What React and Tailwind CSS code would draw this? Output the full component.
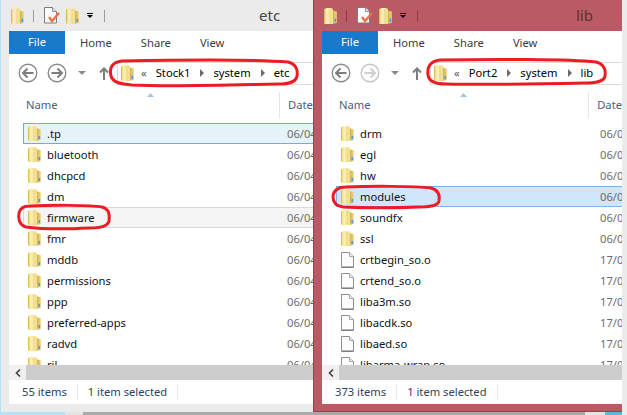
import React from 'react';

const leftRows = ['.tp', 'bluetooth', 'dhcpcd', 'dm', 'firmware', 'fmr', 'mddb', 'permissions', 'ppp', 'preferred-apps', 'radvd', 'ril'];
const rightRows = ['drm', 'egl', 'hw', 'modules', 'soundfx', 'ssl', 'crtbegin_so.o', 'crtend_so.o', 'liba3m.so', 'libacdk.so', 'libaed.so', 'libarma-wrap.so'];

const rowStyles = {
    focus: 'bg-[#e5f3fb] border-[#7da7d8]',
    hover: 'bg-[#f5f5f5] border-[#d9d9d9]',
    selected: 'bg-[#cfe6fc] border-[#7db4ea]',
    none: 'border-transparent',
};

// Side-on folder used in the list, the address bar and the title bar
const Folder = ({ className = 'w-[13px] h-[15px]' }) => (
    <svg viewBox="0 0 13 15" className={`${className} shrink-0`} preserveAspectRatio="none">
        <defs>
            <linearGradient id="folderFront" x1="0" y1="0" x2="1" y2="0">
                <stop offset="0" stopColor="#e9cf72" />
                <stop offset="0.35" stopColor="#fbf1b4" />
                <stop offset="1" stopColor="#f2dc88" />
            </linearGradient>
            <linearGradient id="folderBack" x1="0" y1="0" x2="1" y2="0">
                <stop offset="0" stopColor="#c9a94e" />
                <stop offset="1" stopColor="#efd67e" />
            </linearGradient>
        </defs>
        <path d="M8 2 L12.8 3.2 L12.8 14 L8 15 Z" fill="url(#folderBack)" />
        <path d="M0 1.2 L2.5 0 L7.5 0 L9 1.2 L9 15 L1 15 Q0 15 0 14 Z" fill="url(#folderFront)" />
        <path d="M0.4 1.4 V14" stroke="#d3b458" strokeWidth="0.8" />
        <path d="M6 1 V15" stroke="#e6cd76" strokeWidth="0.7" />
        <rect x="10.5" y="10" width="1.6" height="3.2" fill="#46a0e0" />
    </svg>
);

const FileIcon = () => (
    <svg viewBox="0 0 13 16" className="w-[13px] h-[16px] shrink-0">
        <path d="M0.5 0.5 H8.5 L12.5 4.5 V15.5 H0.5 Z" fill="#fdfdfd" stroke="#8f8f8f" />
        <path d="M8.5 0.5 V4.5 H12.5" fill="#eeeeee" stroke="#a8a8a8" />
        <path d="M1 15 H12" stroke="#6f6f6f" />
    </svg>
);

const DocCheck = () => (
    <svg viewBox="0 0 16 17" className="w-[16px] h-[17px] shrink-0">
        <path d="M0.5 0.5 H8.5 L12.5 4.5 V16 H0.5 Z" fill="#fafafa" stroke="#7c7c7c" />
        <path d="M8.5 0.5 V4.5 H12.5" fill="#e8e8e8" stroke="#8f8f8f" />
        <path d="M5 10 L8 14 L15 6" fill="none" stroke="#e8734a" strokeWidth="2.4" />
    </svg>
);

const NavCircle = ({ dim, flip }) => (
    <svg viewBox="0 0 20 20" className="w-[20px] h-[20px] shrink-0">
        <circle cx="10" cy="10" r="8.8" fill="#fff" stroke={dim ? '#c4c4c4' : '#8a8a8a'} strokeWidth="1.4" />
        <path
            d={flip ? 'M4.5 10 H14.5 M10.5 5.5 L15 10 L10.5 14.5' : 'M15.5 10 H5.5 M9.5 5.5 L5 10 L9.5 14.5'}
            fill="none"
            stroke={dim ? '#cfcfcf' : '#7d7d7d'}
            strokeWidth="2"
        />
    </svg>
);

const Crumb = () => (
    <svg viewBox="0 0 4 8" className="w-[4px] h-[8px] shrink-0">
        <path d="M0 0 L4 4 L0 8 Z" fill="#6a6a6a" />
    </svg>
);

const Explorer = ({ title, titleGap, rows, rowStates, isFile, date, parent, crumbs, items, forwardDim, frame, sep, titleColor, width }) => (
    <div className={`${width} ${frame} shrink-0 h-[412px] flex flex-col overflow-hidden`}>
        {/* Title bar */}
        <div className="h-[31px] shrink-0 flex items-center pl-[10px]">
            <Folder className="w-[13px] h-[16px]" />
            <span className={`w-px h-[12px] ml-[9px] ${sep}`} />
            <span className="ml-[10px]"><DocCheck /></span>
            <span className="ml-[6px]"><Folder className="w-[13px] h-[16px]" /></span>
            <span className="ml-[8px] flex flex-col items-center gap-[1px]">
                <span className="w-[6px] h-px bg-black" />
                <svg viewBox="0 0 6 3" className="w-[6px] h-[3px]"><path d="M0 0 H6 L3 3 Z" fill="#000" /></svg>
            </span>
            <span className={`w-px h-[12px] ml-[11px] ${sep}`} />
            <span className={`${titleGap} text-[15px] leading-none ${titleColor}`}>{title}</span>
        </div>

        {/* Client area */}
        <div className="ml-[8px] flex-1 min-h-0 bg-white flex flex-col">
            {/* Ribbon tabs */}
            <div className="h-[23px] shrink-0 flex items-center text-[11.2px] text-[#3c3c3c]">
                <div className="w-[56px] h-full bg-[#1979ca] text-white flex items-center justify-center">File</div>
                <span className="ml-[15px] mt-[2px]">Home</span>
                <span className="ml-[29px] mt-[2px]">Share</span>
                <span className="ml-[29px] mt-[2px]">View</span>
            </div>

            {/* Address row */}
            <div className="h-[38px] shrink-0 flex items-center pl-[9px]">
                <NavCircle />
                <span className="ml-[9px]"><NavCircle dim={forwardDim} flip /></span>
                <svg viewBox="0 0 8 4" className="w-[8px] h-[4px] ml-[11px] shrink-0"><path d="M0 0 H8 L4 4 Z" fill="#8a8a8a" /></svg>
                <svg viewBox="0 0 10 13" className="w-[10px] h-[13px] ml-[13px] shrink-0">
                    <path d="M5 13 V1.5 M1 5.5 L5 1.5 L9 5.5" fill="none" stroke="#7d7d7d" strokeWidth="2" />
                </svg>
                <div className="ml-[8px] flex-1 h-[23px] border-y border-l border-[#d9d9d9] flex items-center pl-[3px] text-[11.2px] text-black whitespace-nowrap min-w-0">
                    <Folder className="w-[13px] h-[16px]" />
                    <span className="ml-[7px] text-[#555] leading-none">«</span>
                    <span className="ml-[9px]">{parent}</span>
                    <span className="ml-[10px]"><Crumb /></span>
                    <span className="ml-[9px]">system</span>
                    <span className="ml-[10px]"><Crumb /></span>
                    <span className="ml-[9px]">{crumbs}</span>
                </div>
            </div>

            {/* Column header */}
            <div className="h-[26px] shrink-0 flex text-[11.2px] text-[#4c607a] whitespace-nowrap">
                <div className="ml-[17px] w-[254px] border-r border-[#e5e5e5] flex flex-col items-start">
                    <svg viewBox="0 0 7 4" className="w-[7px] h-[4px] ml-[121px] mt-[1px]"><path d="M0 4 L3.5 0 L7 4 Z" fill="#9fc4e4" /></svg>
                    <span className="leading-[16px]">Name</span>
                </div>
                <span className="ml-[8px] mt-[5px] leading-[16px]">Date</span>
            </div>

            {/* File list */}
            <div className="mt-[5px] flex-1 min-h-0 overflow-hidden pl-[14px]">
                {rows.map((name, idx) => (
                    <div key={name} className={`h-[21px] w-[400px] border flex items-center pl-[4px] text-[11.2px] whitespace-nowrap ${rowStyles[rowStates[idx] || 'none']}`}>
                        {isFile(idx) ? <FileIcon /> : <Folder />}
                        <span className="ml-[6px] mt-px w-[240px] text-[#111]">{name}</span>
                        <span className="mt-px text-[#6d6d6d]">{date(idx)}</span>
                    </div>
                ))}
            </div>

            {/* Horizontal scroll bar */}
            <div className="h-[15px] shrink-0 flex">
                <div className="w-[17px] bg-[#f0f0f0] flex items-center justify-center">
                    <svg viewBox="0 0 6 8" className="w-[6px] h-[8px]"><path d="M5 0.5 L1.5 4 L5 7.5" fill="none" stroke="#404040" strokeWidth="1.6" /></svg>
                </div>
                <div className="flex-1 bg-[#cdcdcd]" />
            </div>

            {/* Status bar */}
            <div className="h-[24px] shrink-0 flex items-center pl-[13px] text-[11.2px] text-[#2d3f63] whitespace-nowrap">
                <span className="pr-[10px] border-r border-[#e8e8e8] leading-[16px]">{items}</span>
                <span className="pl-[10px] pr-[10px] border-r border-[#e8e8e8] leading-[16px]">1 item selected</span>
            </div>
        </div>
    </div>
);

// Hand-drawn red annotation, lies over the windows
const RedOutline = () => (
    <svg className="absolute left-0 top-0 w-[627px] h-[415px] pointer-events-none" viewBox="0 0 627 415" fill="none" stroke="#ed1c24" strokeWidth="3">
        <path d="M122 61 C170 60 250 59 288 62 C296 64 298 70 297 76 C296 82 290 84 278 84 C230 85 170 87 132 85 C122 84 113 83 111 76 C109 68 112 62 122 61 Z" />
        <path d="M30 206 C50 205 90 205 102 207 C109 209 110 214 109 221 C108 226 102 228 90 228 C70 229 40 229 26 227 C19 225 18 218 19 213 C20 208 24 206 30 206 Z" />
        <path d="M440 60 C490 59 570 59 596 62 C604 64 606 70 605 76 C604 82 596 83 584 83 C540 84 490 85 446 84 C436 84 429 82 428 75 C427 67 430 61 440 60 Z" />
        <path d="M345 187 C370 186 415 186 431 188 C438 190 440 195 439 201 C438 206 430 207 418 207 C395 208 365 208 343 207 C336 206 333 202 333 197 C333 191 338 187 345 187 Z" />
    </svg>
);

const App = () => {
    return (
        <div className="relative w-[627px] h-[415px] overflow-hidden bg-[#a9a9a9]" style={{ fontFamily: '"Noto Sans", "Open Sans", sans-serif' }}>
            <div className="flex h-[412px]">
                <Explorer
                    width="w-[313px]"
                    frame="bg-[#ebebeb] border-l border-[#b5e3f5] pb-[8px]"
                    sep="bg-[#9d9d9d]"
                    titleColor="text-[#444444]"
                    titleGap="ml-[154px]"
                    title="etc"
                    rows={leftRows}
                    rowStates={{ 0: 'focus', 4: 'hover' }}
                    isFile={() => false}
                    date={() => '06/04/2015'}
                    parent="Stock1"
                    crumbs="etc"
                    items="55 items"
                />
                <Explorer
                    width="w-[309px]"
                    frame="bg-[#b95a64] border-l border-[#8f434c] border-b-[1px] border-b-[#8f434c] pb-[7px]"
                    sep="bg-[#8d4049]"
                    titleColor="text-[#5a3238]"
                    titleGap="ml-[158px]"
                    title="lib"
                    rows={rightRows}
                    rowStates={{ 3: 'selected' }}
                    isFile={(idx) => idx > 5}
                    date={(idx) => (idx > 5 ? '17/04/2015' : '06/04/2015')}
                    parent="Port2"
                    crumbs="lib"
                    items="373 items"
                    forwardDim
                />
                <div className="flex-1 bg-[#ebebeb]" />
            </div>
            {/* Desktop and taskbar peeking out underneath */}
            <div className="h-[3px] flex">
                <div className="w-[65px] bg-[#b5e3f5]" />
                <div className="w-[18px] bg-[#e4e4e4]" />
                <div className="flex-1 bg-[#a9a9a9]" />
                <div className="w-[20px] bg-[#e4e4e4]" />
                <div className="w-[17px] bg-[#5fb6e0]" />
                <div className="w-[5px] bg-[#ebebeb]" />
            </div>
            <RedOutline />
        </div>
    );
};

export default App;
